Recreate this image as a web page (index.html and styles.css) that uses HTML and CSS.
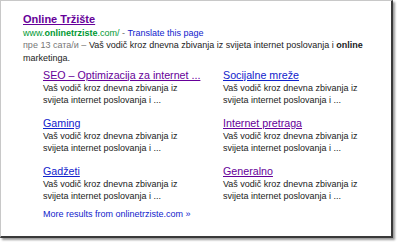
FILE: index.html
```html
<html>
	<head>
		<link rel="stylesheet" href="styles.css">
	</head>
	<body>
		<div class="frame">
			<div class="result">
				<h3 class="title"><a class="visited" href="#">Online Tržište</a></h3>
				<div class="url">www.<b>onlinetrziste</b>.com/ <span class="dash">-</span> <a class="blue" href="#">Translate this page</a></div>
				<div class="snippet"><span class="date">пре 13 сатa/и –</span> Vaš vodič kroz dnevna zbivanja iz svijeta internet poslovanja i <b>online</b> marketinga.</div>

				<div class="sitelinks">
					<div class="sitelink">
						<a class="visited" href="#">SEO – Optimizacija za internet ...</a>
						<p>Vaš vodič kroz dnevna zbivanja iz svijeta internet poslovanja i ...</p>
					</div>
					<div class="sitelink">
						<a class="blue" href="#">Socijalne mreže</a>
						<p>Vaš vodič kroz dnevna zbivanja iz svijeta internet poslovanja i ...</p>
					</div>
					<div class="sitelink">
						<a class="blue" href="#">Gaming</a>
						<p>Vaš vodič kroz dnevna zbivanja iz svijeta internet poslovanja i ...</p>
					</div>
					<div class="sitelink">
						<a class="visited" href="#">Internet pretraga</a>
						<p>Vaš vodič kroz dnevna zbivanja iz svijeta internet poslovanja i ...</p>
					</div>
					<div class="sitelink">
						<a class="blue" href="#">Gadžeti</a>
						<p>Vaš vodič kroz dnevna zbivanja iz svijeta internet poslovanja i ...</p>
					</div>
					<div class="sitelink">
						<a class="visited" href="#">Generalno</a>
						<p>Vaš vodič kroz dnevna zbivanja iz svijeta internet poslovanja i ...</p>
					</div>
				</div>

				<div class="more"><a class="blue" href="#">More results from onlinetrziste.com »</a></div>
			</div>
		</div>
	</body>
</html>
```

FILE: styles.css
```css
body {
	margin: 0;
	background: #ffffff;
	font-family: "Liberation Sans", Arial, sans-serif;
}

.frame {
	width: 390px;
	height: 235px;
	background: #ffffff;
	border-left: 1px solid #c8c8c8;
	border-top: 1px solid #c8c8c8;
	border-right: 2px solid #3a3a3a;
	border-bottom: 2px solid #3a3a3a;
	box-shadow: 2px 2px 2px #9a9a9a;
}

.result {
	padding-top: 11px;
	padding-left: 22px;
	font-size: 9px;
	line-height: 12px;
	color: #222222;
}

a {
	text-decoration: none;
}

.visited {
	color: #660099;
}

.blue {
	color: #1122cc;
}

.title {
	margin: 0;
	font-size: 11px;
	line-height: 15px;
	font-weight: bold;
}

.title a {
	text-decoration: underline;
}

.url {
	color: #009933;
	line-height: 12px;
}

.dash {
	color: #666666;
}

.date {
	color: #777777;
}

.snippet {
	width: 355px;
	line-height: 12.5px;
}

.sitelinks {
	display: grid;
	grid-template-columns: 180px 160px;
	row-gap: 11px;
	margin-top: 4.5px;
	padding-left: 20px;
}

.sitelink a {
	font-size: 10.7px;
	line-height: 13px;
	text-decoration: underline;
}

.sitelink p {
	margin: 0;
	width: 150px;
}

.more {
	margin-top: 6.5px;
	padding-left: 20px;
}
```
